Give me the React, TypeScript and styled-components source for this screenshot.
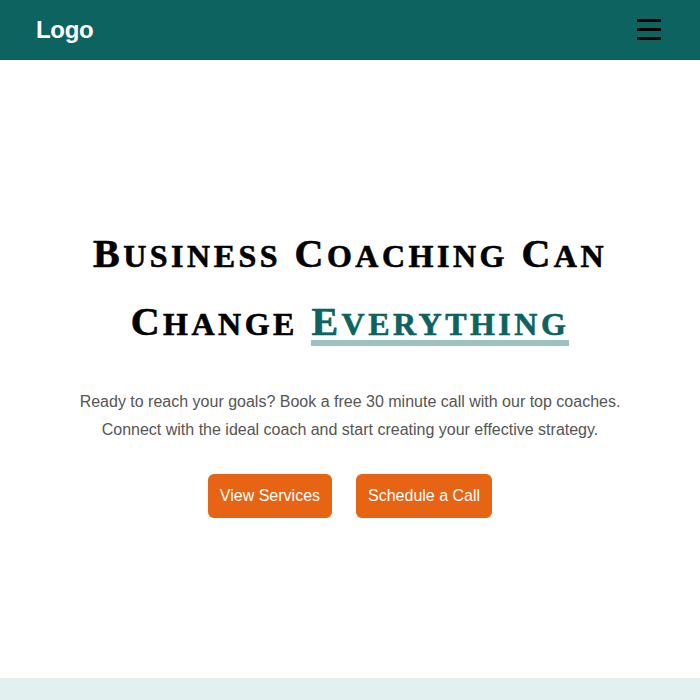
import React from "react";
import styled, { createGlobalStyle } from "styled-components";

const Global = createGlobalStyle`
  html, body { margin: 0; padding: 0; background: #fff; }
  body { font-family: "Liberation Sans", Arial, sans-serif; }
  * { box-sizing: border-box; }
`;

const Header = styled.header`
  height: 60px;
  background: #0d6360;
  display: flex;
  align-items: center;
  justify-content: space-between;
  padding: 0 39px 0 36px;
`;

const Logo = styled.div`
  color: #fff;
  font-family: "Liberation Sans", Arial, sans-serif;
  font-weight: 700;
  font-size: 24px;
  letter-spacing: -0.3px;
`;

const MenuButton = styled.button`
  width: 24px;
  height: 21px;
  margin-top: -1px;
  padding: 0;
  border: none;
  background: transparent;
  display: flex;
  flex-direction: column;
  justify-content: space-between;
  align-items: stretch;
  span {
    display: block;
    height: 3px;
    background: #000;
  }
`;

const Hero = styled.section`
  min-height: 618px;
  display: flex;
  flex-direction: column;
  align-items: center;
  justify-content: center;
  text-align: center;
  padding: 0 20px;
`;

const Title = styled.h1`
  margin: 0;
  font-family: "Liberation Serif", "Times New Roman", serif;
  font-weight: 700;
  font-size: 40px;
  line-height: 68px;
  letter-spacing: 3.5px;
  color: #000;
  -webkit-text-stroke: 0.6px currentColor;
`;

const Small = styled.span`
  font-size: 0.8em;
  line-height: 1;
  text-transform: uppercase;
`;

const Accent = styled.span`
  color: #0d6360;
  line-height: 1;
  padding-bottom: 2px;
  background: linear-gradient(#9dc3c0, #9dc3c0) no-repeat left bottom / 100% 6px;
`;

const Lead = styled.p`
  margin: 32px 0 0;
  font-size: 16px;
  line-height: 28px;
  color: #555;
`;

const Actions = styled.div`
  margin-top: 30px;
  display: flex;
  gap: 24px;
  justify-content: center;
`;

const Button = styled.button`
  background: #e66414;
  color: #fff;
  border: none;
  border-radius: 6px;
  font-family: "Liberation Sans", Arial, sans-serif;
  font-size: 16px;
  line-height: 20px;
  padding: 12px 12px;
  cursor: pointer;
`;

const Band = styled.section`
  height: 22px;
  background: #e2f1f0;
`;

const SC = ({ w }: { w: string }) => (
  <>
    {w[0]}
    <Small>{w.slice(1)}</Small>
  </>
);

export default function App() {
  return (
    <>
      <Global />
      <Header>
        <Logo>Logo</Logo>
        <MenuButton aria-label="Menu">
          <span />
          <span />
          <span />
        </MenuButton>
      </Header>
      <Hero>
        <Title>
          <SC w="Business" /> <SC w="Coaching" /> <SC w="Can" />
          <br />
          <SC w="Change" />{" "}
          <Accent>
            <SC w="Everything" />
          </Accent>
        </Title>
        <Lead>
          Ready to reach your goals? Book a free 30 minute call with our top coaches.
          <br />
          Connect with the ideal coach and start creating your effective strategy.
        </Lead>
        <Actions>
          <Button>View Services</Button>
          <Button>Schedule a Call</Button>
        </Actions>
      </Hero>
      <Band />
    </>
  );
}
